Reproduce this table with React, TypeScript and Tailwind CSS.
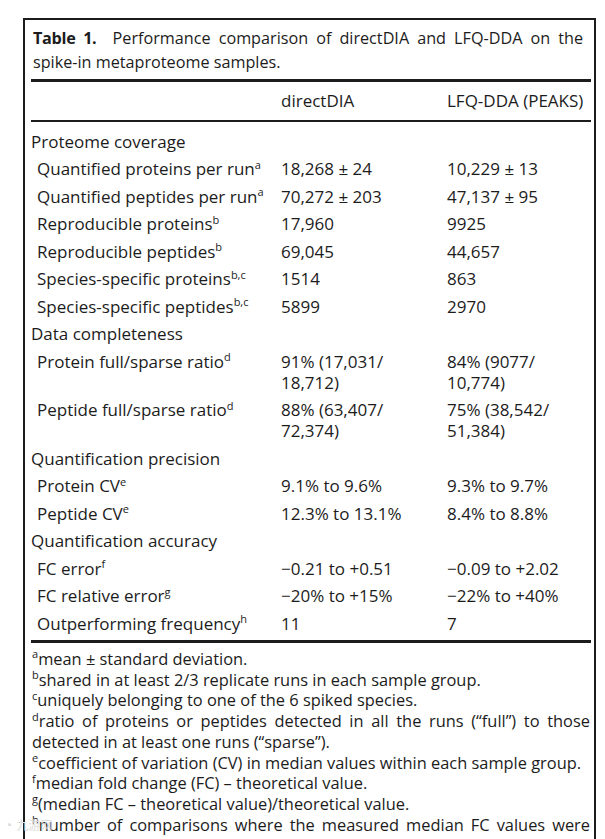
import React from "react";

type RowProps = { label: React.ReactNode; a?: React.ReactNode; b?: React.ReactNode; section?: boolean; extra?: string };

function Row({ label, a, b, section, extra = "" }: RowProps) {
  return (
    <>
      <div className={`py-[3.25px] leading-[21px] ${section ? "pl-0" : "pl-[6px]"} ${extra}`}>{label}</div>
      <div className={`py-[3.25px] leading-[21px] ${extra}`}>{a}</div>
      <div className={`py-[3.25px] leading-[21px] ${extra}`}>{b}</div>
    </>
  );
}

const S = ({ children }: { children: React.ReactNode }) => (
  <sup className="text-[11px] top-[-0.6em]">{children}</sup>
);

export default function App() {
  return (
    <div className="relative h-[839px] w-[605px] overflow-hidden bg-white pt-[18px] pl-[23px] pr-[9px] text-[#1c1c1c] font-['Open_Sans',sans-serif]">
      <div className="border-2 border-[#1c1c1c] pl-[6px] pr-[3px] pt-[6px] h-[900px]">
        <p className="text-[16.2px] leading-[24px] text-justify pl-[2px] pr-[8px]">
          <span className="font-bold tracking-[-0.3px]">Table 1.</span>
          {"\u00a0\u00a0"}Performance comparison of directDIA and LFQ-DDA on the spike-in metaproteome samples.
        </p>
        <div className="mt-[5px] h-[3px] bg-[#1c1c1c]" />
        <div className="grid grid-cols-[250px_166px_1fr] h-[38px] items-center text-[17px]">
          <div />
          <div>directDIA</div>
          <div>LFQ-DDA (PEAKS)</div>
        </div>
        <div className="h-[1.5px] bg-[#1c1c1c]" />
        <div className="grid grid-cols-[250px_166px_1fr] text-[17px] pt-[6px] pb-[3px]">
          <Row section label="Proteome coverage" />
          <Row label={<>Quantified proteins per run<S>a</S></>} a="18,268 ± 24" b="10,229 ± 13" />
          <Row label={<>Quantified peptides per run<S>a</S></>} a="70,272 ± 203" b="47,137 ± 95" />
          <Row label={<>Reproducible proteins<S>b</S></>} a="17,960" b="9925" />
          <Row label={<>Reproducible peptides<S>b</S></>} a="69,045" b="44,657" />
          <Row label={<>Species-specific proteins<S>b,c</S></>} a="1514" b="863" />
          <Row label={<>Species-specific peptides<S>b,c</S></>} a="5899" b="2970" />
          <Row section label="Data completeness" />
          <Row label={<>Protein full/sparse ratio<S>d</S></>} a={<>91% (17,031/<br />18,712)</>} b={<>84% (9077/<br />10,774)</>} />
          <Row label={<>Peptide full/sparse ratio<S>d</S></>} a={<>88% (63,407/<br />72,374)</>} b={<>75% (38,542/<br />51,384)</>} />
          <Row section label="Quantification precision" />
          <Row label={<>Protein CV<S>e</S></>} a="9.1% to 9.6%" b="9.3% to 9.7%" />
          <Row label={<>Peptide CV<S>e</S></>} a="12.3% to 13.1%" b="8.4% to 8.8%" />
          <Row section label="Quantification accuracy" />
          <Row label={<>FC error<S>f</S></>} a="−0.21 to +0.51" b="−0.09 to +2.02" />
          <Row label={<>FC relative error<S>g</S></>} a="−20% to +15%" b="−22% to +40%" />
          <Row label={<>Outperforming frequency<S>h</S></>} a="11" b="7" />
        </div>
        <div className="h-[3px] bg-[#1c1c1c]" />
        <div className="pt-[6px] pl-[1px] pr-[1px] text-[16.4px] leading-[20.7px] text-justify">
          <p><S>a</S>mean ± standard deviation.</p>
          <p><S>b</S>shared in at least 2/3 replicate runs in each sample group.</p>
          <p><S>c</S>uniquely belonging to one of the 6 spiked species.</p>
          <p><S>d</S>ratio of proteins or peptides detected in all the runs (“full”) to those detected in at least one runs (“sparse”).</p>
          <p><S>e</S>coefficient of variation (CV) in median values within each sample group.</p>
          <p><S>f</S>median fold change (FC) – theoretical value.</p>
          <p><S>g</S>(median FC – theoretical value)/theoretical value.</p>
          <p><S>h</S>number of comparisons where the measured median FC values were closer to the theoretical values than the other quantification.</p>
        </div>
      </div>
      <div className="absolute left-[4px] top-[814px] flex items-center gap-[4px] text-[12px] text-[#dcdcdc] font-['Noto_Sans_CJK_SC',sans-serif]">
        <span className="text-[14px]">◔</span>
        <span>九游网</span>
      </div>
    </div>
  );
}
